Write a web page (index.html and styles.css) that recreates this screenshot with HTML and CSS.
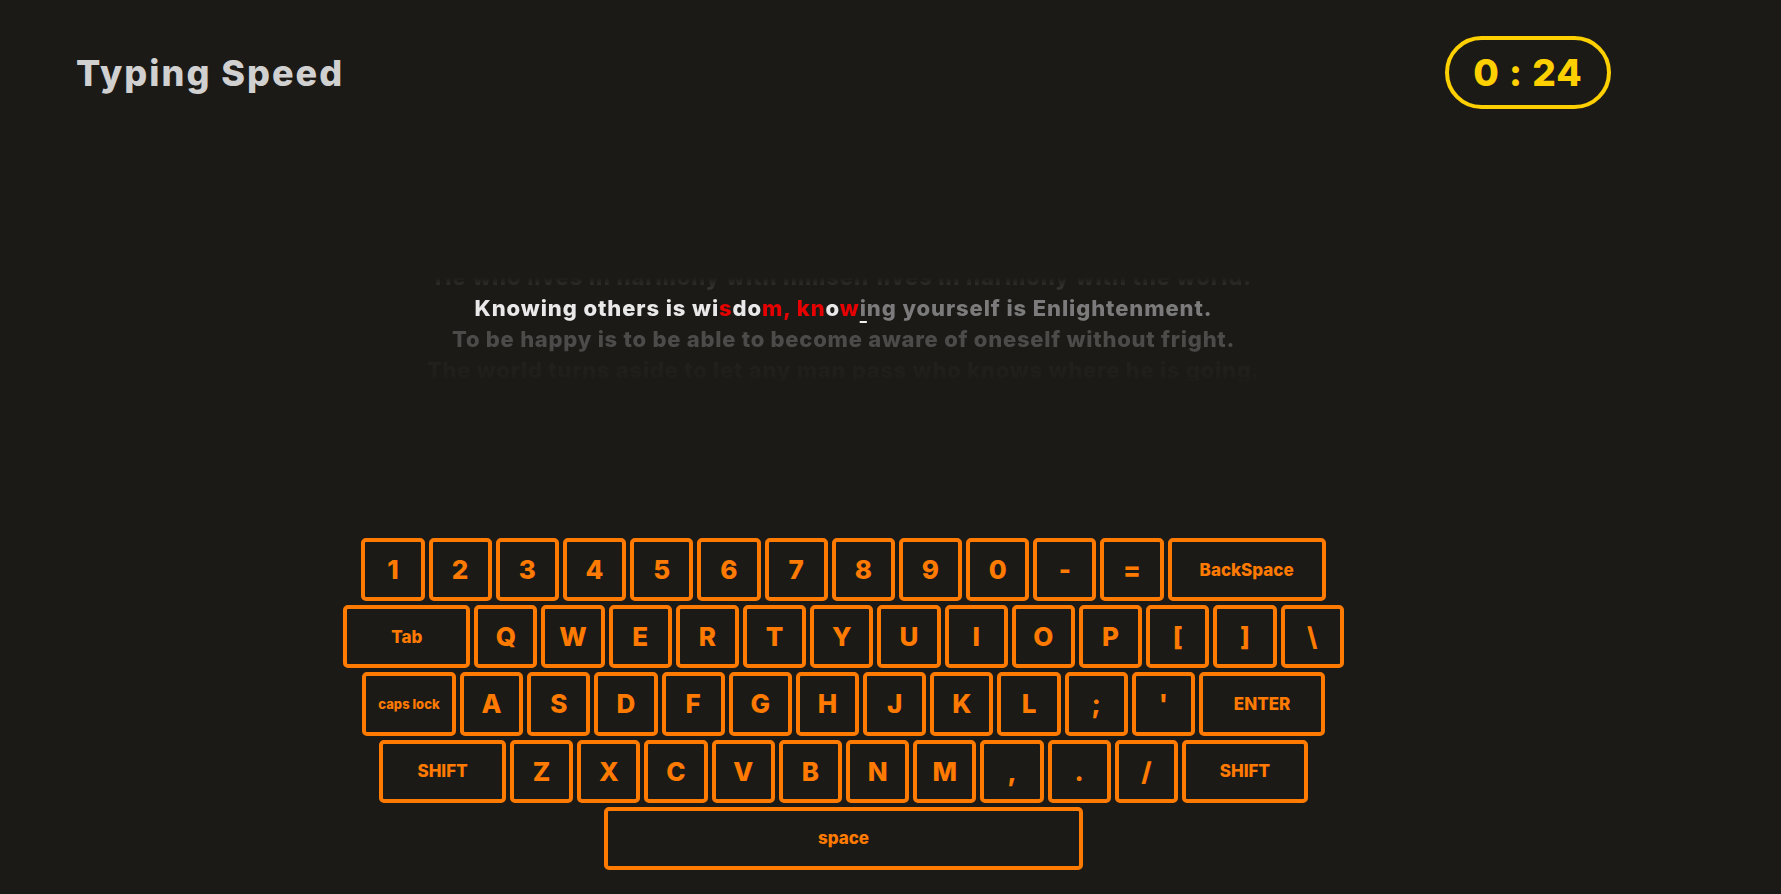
FILE: index.html
```html
<!DOCTYPE html>
<html lang="en">
<head>
<meta charset="utf-8">
<title>Typing Speed</title>
<link rel="stylesheet" href="styles.css">
</head>
<body>
<div class="app">
  <header class="header">
    <h1 class="title">Typing Speed</h1>
    <div class="timer">0 : 24</div>
  </header>

  <section class="quotes">
    <div class="quotes-inner">
      <p class="line line-prev">He who lives in harmony with himself lives in harmony with the world.</p>
      <p class="line line-current"><span class="ok">Knowing others is wi</span><span class="bad">s</span><span class="ok">do</span><span class="bad">m, kn</span><span class="ok">o</span><span class="bad">w</span><span class="cursor">i</span><span class="todo">ng yourself is Enlightenment.</span></p>
      <p class="line line-next">To be happy is to be able to become aware of oneself without fright.</p>
      <p class="line line-far">The world turns aside to let any man pass who knows where he is going.</p>
    </div>
  </section>

  <section class="keyboard">
    <div class="row">
      <div class="key">1</div><div class="key">2</div><div class="key">3</div><div class="key">4</div><div class="key">5</div><div class="key">6</div><div class="key">7</div><div class="key">8</div><div class="key">9</div><div class="key">0</div><div class="key">-</div><div class="key">=</div>
      <div class="key sm backspace">BackSpace</div>
    </div>
    <div class="row">
      <div class="key sm tab">Tab</div>
      <div class="key">Q</div><div class="key">W</div><div class="key">E</div><div class="key">R</div><div class="key">T</div><div class="key">Y</div><div class="key">U</div><div class="key">I</div><div class="key">O</div><div class="key">P</div><div class="key">[</div><div class="key">]</div><div class="key">\</div>
    </div>
    <div class="row">
      <div class="key xs caps">caps lock</div>
      <div class="key">A</div><div class="key">S</div><div class="key">D</div><div class="key">F</div><div class="key">G</div><div class="key">H</div><div class="key">J</div><div class="key">K</div><div class="key">L</div><div class="key">;</div><div class="key">'</div>
      <div class="key sm enter">ENTER</div>
    </div>
    <div class="row">
      <div class="key sm shift-l">SHIFT</div>
      <div class="key">Z</div><div class="key">X</div><div class="key">C</div><div class="key">V</div><div class="key">B</div><div class="key">N</div><div class="key">M</div><div class="key">,</div><div class="key">.</div><div class="key">/</div>
      <div class="key sm shift-r">SHIFT</div>
    </div>
    <div class="row">
      <div class="key sm space">space</div>
    </div>
  </section>
</div>
</body>
</html>
```

FILE: styles.css
```css
* { box-sizing: border-box; }

html, body {
  margin: 0;
  padding: 0;
  background: #1c1a17;
}

body {
  font-family: Inter, "Noto Sans", "Liberation Sans", sans-serif;
  font-weight: 800;
  height: 894px;
  overflow: hidden;
}

.app {
  width: 1687px;
  padding: 36px 76px 0 76px;
  display: flex;
  flex-direction: column;
}

.header {
  display: flex;
  justify-content: space-between;
  align-items: center;
  height: 73px;
}

.title {
  margin: 0;
  font-size: 36px;
  font-weight: 800;
  color: #d0d0d0;
  letter-spacing: 2px;
}

.timer {
  width: 166px;
  height: 73px;
  border: 4px solid #ffd000;
  border-radius: 40px;
  display: flex;
  align-items: center;
  justify-content: center;
  color: #ffd000;
  font-size: 37px;
  font-weight: 800;
  letter-spacing: 1px;
}

.quotes {
  margin-top: 168px;
  height: 104px;
  overflow: hidden;
  -webkit-mask-image: linear-gradient(to bottom, transparent 0, #000 18px, #000 70px, rgba(0,0,0,0.3) 100%);
  mask-image: linear-gradient(to bottom, transparent 0, #000 18px, #000 70px, rgba(0,0,0,0.3) 100%);
}

.quotes-inner {
  margin-top: -15px;
}

.line {
  margin: 0;
  height: 31px;
  line-height: 31px;
  font-size: 22px;
  font-weight: 800;
  letter-spacing: 0.9px;
  text-align: center;
  white-space: nowrap;
}

.line-prev { color: #454442; }
.line-next { color: #4c4b4a; letter-spacing: 0.75px; }
.line-far { color: #262422; letter-spacing: 0.75px; }

.line-current .ok { color: #e9e9e9; }
.line-current .bad { color: #e60000; }
.line-current .todo { color: #7b7b7b; }
.line-current .cursor {
  color: #7b7b7b;
  text-decoration: underline;
  text-decoration-color: #f0f0f0;
  text-decoration-thickness: 2px;
  text-underline-offset: 5px;
}

.keyboard {
  margin-top: 157px;
  display: flex;
  flex-direction: column;
  gap: 4px;
}

.row {
  display: flex;
  justify-content: center;
  gap: 4px;
}

.key {
  width: 63.2px;
  height: 63.2px;
  border: 4px solid #ff7a00;
  border-radius: 5px;
  display: flex;
  align-items: center;
  justify-content: center;
  color: #ff7a00;
  font-size: 26px;
  font-weight: 800;
}

.key.sm { font-size: 17px; }
.key.xs { font-size: 13px; }

.backspace { width: 158px; }
.tab { width: 127px; }
.caps { width: 94px; }
.enter { width: 126px; }
.shift-l { width: 127px; }
.shift-r { width: 126px; }
.space { width: 479px; }
```
